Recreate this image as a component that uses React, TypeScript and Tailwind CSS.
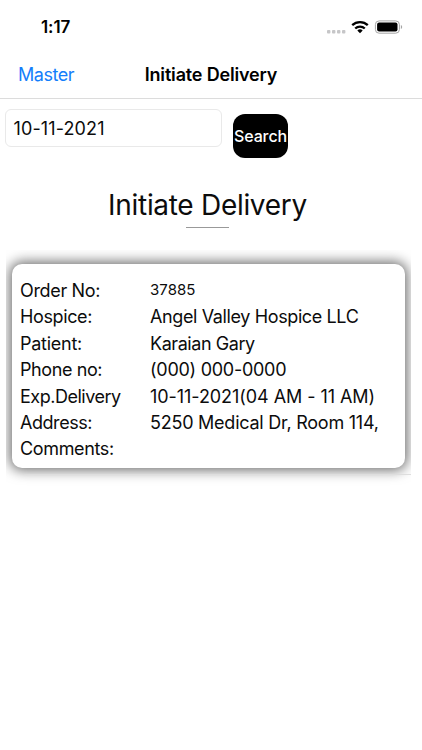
type Row = { label: string; value: string; small?: boolean; labelClass: string; valueClass: string };

const rows: Row[] = [
  { label: 'Order No:', value: '37885', small: true, labelClass: 'tracking-[-0.34px]', valueClass: 'tracking-[0.05px]' },
  { label: 'Hospice:', value: 'Angel Valley Hospice LLC', labelClass: 'tracking-[-0.38px]', valueClass: 'tracking-[-0.38px]' },
  { label: 'Patient:', value: 'Karaian Gary', labelClass: 'tracking-[-0.25px]', valueClass: 'tracking-[-0.44px]' },
  { label: 'Phone no:', value: '(000) 000-0000', labelClass: 'tracking-[-0.4px]', valueClass: 'tracking-[-0.27px]' },
  { label: 'Exp.Delivery', value: '10-11-2021(04 AM - 11 AM)', labelClass: 'tracking-[-0.48px]', valueClass: 'tracking-[-0.06px]' },
  { label: 'Address:', value: '5250 Medical Dr, Room 114,', labelClass: 'tracking-[-0.45px]', valueClass: 'tracking-[-0.24px]' },
  { label: 'Comments:', value: '', labelClass: 'tracking-[-0.36px]', valueClass: '' },
];

function StatusIcons() {
  return (
    <svg width="80" height="18" viewBox="0 0 80 18" className="mr-[18px]" aria-hidden="true">
      <g fill="#c6c6c8">
        <rect x="3" y="12" width="3.4" height="3.4" rx="0.9" />
        <rect x="8" y="12" width="3.4" height="3.4" rx="0.9" />
        <rect x="13" y="12" width="3.4" height="3.4" rx="0.9" />
        <rect x="18" y="12" width="3.4" height="3.4" rx="0.9" />
      </g>
      <g fill="none" stroke="#000" strokeWidth="2.3">
        <path d="M28.2 7.2a11.2 11.2 0 0 1 15.6 0" />
        <path d="M31.2 10.5a6.9 6.9 0 0 1 9.6 0" />
      </g>
      <path d="M33.3 12.6a3.9 3.9 0 0 1 5.4 0L36 15.3z" fill="#000" />
      <rect x="51.4" y="2.9" width="24" height="12.3" rx="3.7" fill="none" stroke="#a5a5a5" />
      <rect x="53.1" y="4.6" width="20.4" height="8.9" rx="2" fill="#000" />
      <path d="M76.9 7v4c1.7-.6 1.7-3.4 0-4z" fill="#a5a5a5" />
    </svg>
  );
}

export default function App() {
  return (
    <div className="flex h-[750px] w-[422px] flex-col overflow-hidden bg-white font-[Inter,sans-serif] text-[#0c0c0c]">
      <header className="h-[99px] border-b border-[#dcdcdc] text-black">
        <div className="flex h-[54px] items-center justify-between">
          <span className="ml-[41px] pt-[2px] text-[17px] font-semibold tracking-[-0.1px]">1:17</span>
          <StatusIcons />
        </div>
        <nav className="grid h-[41px] grid-cols-[1fr_auto_1fr] items-center whitespace-nowrap">
          <a className="ml-[18px] text-[18px] tracking-[-0.45px] text-[#147efb]">Master</a>
          <h1 className="text-[18px] font-semibold tracking-[-0.17px]">Initiate Delivery</h1>
        </nav>
      </header>

      <form className="flex h-[59px] gap-[11px] pl-[5px] pt-[10px]">
        <div className="flex h-[38px] w-[217px] items-center rounded-[6px] border border-[#e9e9e9] pl-[7.5px] pt-px text-[18px] tracking-[0.12px]">
          10-11-2021
        </div>
        <button type="button" className="mt-[5px] flex h-[44px] w-[55px] items-center justify-center whitespace-nowrap rounded-[12px] bg-black text-[16px] font-medium tracking-[-0.1px] text-white">
          Search
        </button>
      </form>

      <div className="flex h-[92px] flex-col items-center pt-[27px] pr-[7px]">
        <h2 className="h-[41px] whitespace-nowrap text-[28px] leading-[40px] tracking-[-0.3px]">Initiate Delivery</h2>
        <div className="mt-px h-px w-[43px] bg-[#999]" />
      </div>

      <section className="ml-[6px] h-[240px] w-[405px] overflow-hidden pl-[6px] pt-[14px]">
        <div className="h-[204px] w-[393px] rounded-[10px] bg-white pl-[8px] pt-[13px] shadow-[0_0_13px_2px_rgba(0,0,0,0.6)]">
          {rows.map((row) => (
            <div key={row.label} className="grid h-[26.4px] grid-cols-[130px_1fr] items-center whitespace-nowrap text-[18px]">
              <span className={row.labelClass}>{row.label}</span>
              <span className={`${row.valueClass} ${row.small ? 'text-[15px]' : ''}`}>{row.value}</span>
            </div>
          ))}
        </div>
        <div className="ml-[12px] mt-[6px] h-px bg-[#dedede]" />
      </section>
    </div>
  );
}
